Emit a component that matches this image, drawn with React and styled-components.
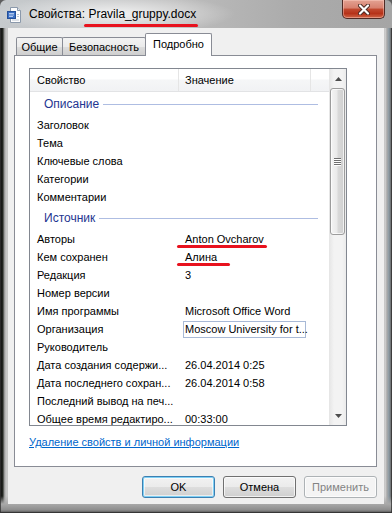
import React from "react";
import styled, { createGlobalStyle } from "styled-components";

const UI = '"Liberation Sans", Arial, sans-serif';

const GlobalStyle = createGlobalStyle`
  html, body { margin: 0; padding: 0; background: #5e5e5e; }
  body { width: 392px; height: 513px; overflow: hidden; font-family: ${UI}; }
  * { box-sizing: border-box; }
`;

const Window = styled.div`
  width: 392px;
  height: 513px;
  display: flex;
  flex-direction: column;
  border-radius: 6px 6px 0 0;
  background:
    linear-gradient(to bottom, transparent 496px, #a9a9a9 504px, #8d8d8d 510px, #4b4b4b 513px),
    linear-gradient(to right, #4a4a4a 0, #141414 1px, #262a24 3px, #8c8c8c 4px, #c7c7c7 6px, #bebebe 50%,
      #b9b9b9 384px, #d6d6d6 385px, #a8a8a8 387px, #8a9aa4 389px, #6c6c6c 391px);
  box-shadow: inset 0 0 0 1px rgba(40, 40, 40, 0.7);
  overflow: hidden;
`;

const TitleBar = styled.div`
  height: 28px;
  flex: none;
  display: flex;
  align-items: flex-start;
  padding-left: 7px;
  background:
    radial-gradient(ellipse 120px 20px at 115px 14px, rgba(255, 255, 255, 0.8), rgba(255, 255, 255, 0) 100%),
    linear-gradient(to right, #c6cacd, #bdbdbd 45%, #ababab 75%, #a5a5a5);
`;

const DocIcon = styled.svg`
  margin-top: 7px;
  flex: none;
`;

const Title = styled.div`
  margin: 7px 0 0 6px;
  font-size: 12px;
  line-height: 14px;
  color: #000;
  white-space: nowrap;
`;

const Marked = styled.span`
  position: relative;
  &::after {
    content: "";
    position: absolute;
    left: -${(p) => p.$l}px;
    right: -${(p) => p.$r}px;
    bottom: -${(p) => p.$b}px;
    height: 3px;
    border-radius: 2px;
    background: #e8121e;
  }
`;

const CloseButton = styled.div`
  margin-left: auto;
  margin-right: 7px;
  width: 43px;
  height: 19px;
  display: flex;
  align-items: center;
  justify-content: center;
  border: 1px solid #4f2a25;
  border-top: none;
  border-radius: 0 0 5px 5px;
  background: linear-gradient(to bottom, #e3a293 0%, #d7806e 45%, #c14a31 50%, #b63219 75%, #d06547 100%);
  box-shadow: inset 0 0 0 1px rgba(255, 210, 200, 0.45);
`;

const Client = styled.div`
  flex: 1;
  margin: 0 8px 9px 8px;
  padding: 5px 7px 6px 6px;
  background: #f0f0f0;
  display: flex;
  flex-direction: column;
`;

const TabRow = styled.div`
  height: 22px;
  display: flex;
  align-items: flex-end;
  padding-left: 2px;
`;

const Tab = styled.div`
  width: ${(p) => p.$w}px;
  height: ${(p) => (p.$active ? 23 : 18)}px;
  margin-bottom: ${(p) => (p.$active ? -1 : 0)}px;
  margin-left: -1px;
  &:first-child { margin-left: 0; }
  position: relative;
  z-index: ${(p) => (p.$active ? 2 : 1)};
  border: 1px solid #898c95;
  border-bottom: none;
  border-radius: 2px 2px 0 0;
  background: ${(p) =>
    p.$active ? "#fff" : "linear-gradient(to bottom, #f3f3f3 0%, #ebebeb 50%, #dddddd 51%, #cfcfcf 100%)"};
  display: flex;
  align-items: center;
  justify-content: center;
  padding-bottom: ${(p) => (p.$active ? 2 : 0)}px;
  font-size: 11px;
  color: #000;
`;

const Panel = styled.div`
  height: 412px;
  flex: none;
  border: 1px solid #898c95;
  background: #fff;
  padding: 12px 0 0 14px;
  display: flex;
  flex-direction: column;
`;

const ListView = styled.div`
  width: 318px;
  height: 358px;
  border: 1px solid #828790;
  display: flex;
  overflow: hidden;
  font-size: 11px;
`;

const ListBody = styled.div`
  flex: 1;
  display: flex;
  flex-direction: column;
  overflow: hidden;
`;

const Header = styled.div`
  height: 23px;
  flex: none;
  display: flex;
  border-bottom: 1px solid #e2e3e5;
  background: linear-gradient(to bottom, #ffffff 0%, #ffffff 45%, #f5f6f7 50%, #f1f2f4 100%);
`;

const HeaderCell = styled.div`
  width: ${(p) => (p.$w ? `${p.$w}px` : "auto")};
  flex: ${(p) => (p.$w ? "none" : 1)};
  padding-left: ${(p) => p.$pad}px;
  display: flex;
  align-items: center;
  border-right: ${(p) => (p.$w ? "1px solid #e5e5e5" : "none")};
  color: #000;
  white-space: nowrap;
`;

const GroupRow = styled.div`
  height: 24px;
  flex: none;
  display: flex;
  align-items: center;
  padding: 0 11px 0 14px;
`;

const GroupLabel = styled.span`
  color: #1e3591;
  font-size: 12px;
  white-space: nowrap;
`;

const GroupLine = styled.div`
  flex: 1;
  height: 1px;
  margin: 1px 0 0 4px;
  background: #aebde2;
`;

const Row = styled.div`
  height: 18px;
  flex: none;
  display: flex;
  align-items: center;
  color: #000;
  white-space: nowrap;
`;

const NameCell = styled.div`
  width: 148px;
  flex: none;
  padding-left: 7px;
`;

const ValueCell = styled.div`
  padding-left: 7px;
`;

const Field = styled.span`
  display: inline-block;
  width: 123px;
  height: 17px;
  margin-left: -2px;
  padding: 0 1px;
  line-height: 15px;
  border: 1px solid #a8b9d6;
  background: #fff;
`;

const ScrollBar = styled.div`
  width: 17px;
  flex: none;
  display: flex;
  flex-direction: column;
  border-left: 1px solid #e6e6e6;
  background: linear-gradient(to right, #e8e8e8, #f3f3f3 25%, #f3f3f3 75%, #ebebeb);
`;

const ArrowButton = styled.div`
  height: 19px;
  flex: none;
  display: flex;
  align-items: center;
  justify-content: center;
`;

const Thumb = styled.div`
  height: 147px;
  flex: none;
  margin: 0 1px 0 0;
  border: 1px solid #9c9c9c;
  border-radius: 3px;
  background: linear-gradient(to right, #f4f4f4 0%, #eaeaea 45%, #d9d9d9 55%, #d0d0d0 100%);
  box-shadow: inset 0 0 0 1px rgba(255, 255, 255, 0.7);
  display: flex;
  flex-direction: column;
  align-items: center;
  justify-content: center;
  gap: 1px;
`;

const Grip = styled.div`
  width: 7px;
  height: 1px;
  background: #6f6f6f;
  box-shadow: 0 1px 0 #fff;
`;

const Track = styled.div`
  flex: 1;
`;

const LinkText = styled.a`
  margin-top: 9px;
  font-size: 11px;
  line-height: 14px;
  color: #0066cc;
  text-decoration: underline;
  align-self: flex-start;
  cursor: pointer;
`;

const ButtonRow = styled.div`
  margin-top: 9px;
  display: flex;
  justify-content: flex-end;
  gap: 8px;
`;

const Button = styled.div`
  width: 73px;
  height: 22px;
  display: flex;
  align-items: center;
  justify-content: center;
  font-size: 11px;
  border-radius: 3px;
  border: 1px solid ${(p) => (p.$default ? "#3c7fb1" : p.$disabled ? "#adb2b5" : "#707070")};
  color: ${(p) => (p.$disabled ? "#838383" : "#000")};
  background: ${(p) =>
    p.$disabled ? "#f4f4f4" : "linear-gradient(to bottom, #f2f2f2 0%, #ebebeb 50%, #dddddd 51%, #cfcfcf 100%)"};
  box-shadow: ${(p) =>
    p.$default ? "inset 0 0 0 1px #7fd0f5, inset 0 0 0 2px rgba(255,255,255,0.6)" : "inset 0 0 0 1px rgba(255,255,255,0.7)"};
`;

const rows = [
  { group: "Описание" },
  { name: "Заголовок" },
  { name: "Тема" },
  { name: "Ключевые слова" },
  { name: "Категории" },
  { name: "Комментарии" },
  { group: "Источник" },
  { name: "Авторы", value: "Anton Ovcharov", mark: [8, 3] },
  { name: "Кем сохранен", value: "Алина", mark: [8, 13] },
  { name: "Редакция", value: "3" },
  { name: "Номер версии" },
  { name: "Имя программы", value: "Microsoft Office Word" },
  { name: "Организация", value: "Moscow University for t...", field: true },
  { name: "Руководитель" },
  { name: "Дата создания содержи...", value: "26.04.2014 0:25" },
  { name: "Дата последнего сохран...", value: "26.04.2014 0:58" },
  { name: "Последний вывод на печ..." },
  { name: "Общее время редактиро...", value: "00:33:00" },
];

function Arrow({ down }) {
  return (
    <svg width="7" height="4" viewBox="0 0 7 4">
      <polygon points={down ? "0,0 7,0 3.5,4" : "0,4 7,4 3.5,0"} fill="#4d4d4d" />
    </svg>
  );
}

function Value({ row }) {
  if (row.field) return <Field>{row.value}</Field>;
  if (row.mark) {
    return (
      <Marked $l={row.mark[0]} $r={row.mark[1]} $b={3}>
        {row.value}
      </Marked>
    );
  }
  return row.value || null;
}

export default function App() {
  return (
    <>
      <GlobalStyle />
      <Window>
        <TitleBar>
          <DocIcon width="16" height="16" viewBox="0 0 16 16">
            <path d="M3.5 0.5 H10.5 L13.5 3.5 V15.5 H3.5 Z" fill="#fdfdfd" stroke="#8b99ab" />
            <path d="M10.5 0.5 V3.5 H13.5" fill="#dfe6ee" stroke="#8b99ab" />
            <rect x="0.5" y="4.5" width="8" height="7" fill="#3a6fc4" stroke="#24509a" />
            <path d="M2 6.5 H7 M2 8 H7 M2 9.5 H6" stroke="#cfe0fa" strokeWidth="0.8" />
            <path d="M10 7.5 H12 M10 9.5 H12 M5 13 H12" stroke="#aab6c6" strokeWidth="0.8" />
          </DocIcon>
          <Title>
            Свойства:{" "}
            <Marked $l={4} $r={2} $b={6}>
              Pravila_gruppy.docx
            </Marked>
          </Title>
          <CloseButton>
            <svg width="12" height="11" viewBox="0 0 12 11">
              <path d="M2 1.5 L10 9.5 M10 1.5 L2 9.5" stroke="#4a2a24" strokeWidth="4" strokeLinecap="round" />
              <path d="M2 1.5 L10 9.5 M10 1.5 L2 9.5" stroke="#ffffff" strokeWidth="2.2" strokeLinecap="round" />
            </svg>
          </CloseButton>
        </TitleBar>

        <Client>
          <TabRow>
            <Tab $w={47}>Общие</Tab>
            <Tab $w={84}>Безопасность</Tab>
            <Tab $w={67} $active>
              Подробно
            </Tab>
          </TabRow>

          <Panel>
            <ListView>
              <ListBody>
                <Header>
                  <HeaderCell $w={149} $pad={7}>
                    Свойство
                  </HeaderCell>
                  <HeaderCell $w={132} $pad={6}>
                    Значение
                  </HeaderCell>
                  <HeaderCell $pad={0} />
                </Header>
                {rows.map((row, i) =>
                  row.group ? (
                    <GroupRow key={i}>
                      <GroupLabel>{row.group}</GroupLabel>
                      <GroupLine />
                    </GroupRow>
                  ) : (
                    <Row key={i}>
                      <NameCell>{row.name}</NameCell>
                      <ValueCell>
                        <Value row={row} />
                      </ValueCell>
                    </Row>
                  )
                )}
              </ListBody>
              <ScrollBar>
                <ArrowButton>
                  <Arrow />
                </ArrowButton>
                <Thumb>
                  <Grip />
                  <Grip />
                  <Grip />
                  <Grip />
                </Thumb>
                <Track />
                <ArrowButton>
                  <Arrow down />
                </ArrowButton>
              </ScrollBar>
            </ListView>
            <LinkText>Удаление свойств и личной информации</LinkText>
          </Panel>

          <ButtonRow>
            <Button $default>OK</Button>
            <Button>Отмена</Button>
            <Button $disabled>Применить</Button>
          </ButtonRow>
        </Client>
      </Window>
    </>
  );
}
